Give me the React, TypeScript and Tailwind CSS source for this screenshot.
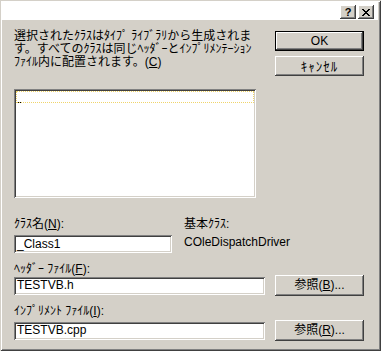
import React from "react";

const FONT = { fontFamily: '"Liberation Sans", "Noto Sans CJK JP", sans-serif' };

const raised =
  "bg-[#d4d0c8] shadow-[inset_-1px_-1px_#404040,inset_1px_1px_#ffffff,inset_-2px_-2px_#808080,inset_2px_2px_#d4d0c8]";
const sunken =
  "bg-white shadow-[inset_1px_1px_#808080,inset_-1px_-1px_#ffffff,inset_2px_2px_#404040,inset_-2px_-2px_#d4d0c8]";

function Btn({ children, def = false, h = "h-[20px]" }: { children: React.ReactNode; def?: boolean; h?: string }) {
  if (def) {
    return (
      <div className={`w-[89px] ${h} border border-black flex`}>
        <div className={`flex-1 ${raised} flex items-center justify-center text-[12px] leading-[13px] text-black`}>
          {children}
        </div>
      </div>
    );
  }
  return (
    <div className={`w-[89px] ${h} ${raised} flex items-center justify-center text-[12px] leading-[13px] text-black`}>
      {children}
    </div>
  );
}

function Edit({ w, value }: { w: string; value: string }) {
  return (
    <div className={`${w} h-[18px] ${sunken} flex items-center pl-[3px] text-[12px] leading-[13px] text-black`}>
      {value}
    </div>
  );
}

export default function App() {
  return (
    <div
      style={FONT}
      className="w-[381px] h-[351px] bg-[#d4d0c8] p-[2px] shadow-[inset_1px_1px_#d4d0c8,inset_-1px_-1px_#404040,inset_2px_2px_#ffffff,inset_-2px_-2px_#808080] flex flex-col overflow-hidden"
    >
      {/* title bar */}
      <div className="h-[18px] bg-white flex justify-end items-start pt-[3px] pr-[4px] gap-[2px] mr-[1px]">
        <div className={`w-[16px] h-[14px] ${raised} flex items-center justify-center`}>
          <span className="text-[11px] font-bold leading-none text-black" style={{ fontFamily: '"Liberation Sans", sans-serif' }}>?</span>
        </div>
        <div className={`w-[16px] h-[14px] ${raised} flex items-center justify-center`}>
          <svg width="8" height="7" viewBox="0 0 8 7" shapeRendering="crispEdges">
            <path d="M0 0h2v1H0zM6 0h2v1H6zM1 1h2v1H1zM5 1h2v1H5zM2 2h4v1H2zM3 3h2v1H3zM2 4h4v1H2zM1 5h2v1H1zM5 5h2v1H5zM0 6h2v1H0zM6 6h2v1H6z" fill="#000" />
          </svg>
        </div>
      </div>

      {/* body */}
      <div className="pl-[12px] pt-[10px] flex flex-col text-black">
        <div className="flex items-start">
          <div className="w-[251px] text-[12px] leading-[13px] whitespace-pre">
            <div>選択されたｸﾗｽはﾀｲﾌﾟ ﾗｲﾌﾞﾗﾘから生成されま</div>
            <div>す。すべてのｸﾗｽは同じﾍｯﾀﾞｰとｲﾝﾌﾟﾘﾒﾝﾃｰｼｮﾝ</div>
            <div>
              ﾌｧｲﾙ内に配置されます。(<span className="underline underline-offset-[1px]">C</span>)
            </div>
          </div>
          <div className="ml-[10px] mt-[1px] flex flex-col gap-[5px]">
            <Btn def>OK</Btn>
            <Btn>
              <span className="text-[13px] tracking-[1px]">ｷｬﾝｾﾙ</span>
            </Btn>
          </div>
        </div>

        {/* list box */}
        <div className={`relative mt-[13px] w-[242px] h-[109px] ${sunken} p-[2px]`}>
          <div className="h-[12px] border border-dotted border-[#f0d46a]" />
          <div className="absolute left-[4px] top-[13px] w-[1px] h-[1px] bg-black" />
          <div className="absolute left-[6px] top-[13px] w-[1px] h-[1px] bg-black" />
        </div>

        {/* class name */}
        <div className="mt-[20px] flex text-[12px] leading-[13px]">
          <div className="w-[170px]">
            ｸﾗｽ名(<span className="underline underline-offset-[1px]">N</span>):
          </div>
          <div>基本ｸﾗｽ:</div>
        </div>
        <div className="mt-[4px] flex items-start">
          <Edit w="w-[158px]" value="_Class1" />
          <div className="ml-[12px] text-[12px] leading-[13px] pt-[1px]">COleDispatchDriver</div>
        </div>

        {/* header file */}
        <div className="mt-[10px] text-[12px] leading-[13px]">
          ﾍｯﾀﾞｰ ﾌｧｲﾙ(<span className="underline underline-offset-[1px]">F</span>):
        </div>
        <div className="-mt-[1px] flex items-center">
          <Edit w="w-[251px]" value="TESTVB.h" />
          <div className="ml-[10px]">
            <Btn h="h-[21px]">
              参照(<span className="underline underline-offset-[1px]">B</span>)...
            </Btn>
          </div>
        </div>

        {/* impl file */}
        <div className="mt-[9px] text-[12px] leading-[13px]">
          ｲﾝﾌﾟﾘﾒﾝﾄ ﾌｧｲﾙ(<span className="underline underline-offset-[1px]">I</span>):
        </div>
        <div className="mt-[2px] flex items-center">
          <Edit w="w-[251px]" value="TESTVB.cpp" />
          <div className="ml-[10px]">
            <Btn h="h-[21px]">
              参照(<span className="underline underline-offset-[1px]">R</span>)...
            </Btn>
          </div>
        </div>
      </div>
    </div>
  );
}
